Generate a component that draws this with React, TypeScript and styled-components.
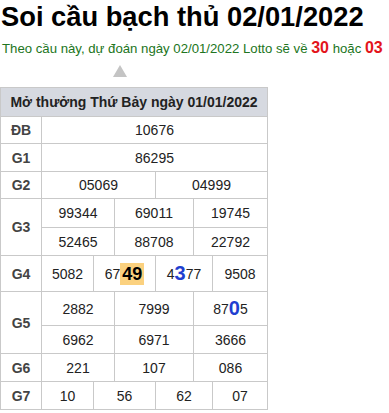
import React from "react";
import styled, { createGlobalStyle } from "styled-components";

const GlobalStyle = createGlobalStyle`
  body {
    margin: 0;
    background: #fff;
    font-family: "Liberation Sans", Arial, sans-serif;
  }
`;

const Page = styled.div`
  display: flex;
  flex-direction: column;
  align-items: flex-start;
`;

const Title = styled.h1`
  margin: 2px 0 0;
  padding-left: 1px;
  font-size: 27.3px;
  line-height: 30px;
  font-weight: bold;
  color: #000;
  white-space: nowrap;
`;

const Prediction = styled.div`
  margin-top: 6px;
  padding-left: 2px;
  font-size: 13.2px;
  line-height: 20px;
  color: #217521;
  white-space: nowrap;
`;

const Lotto = styled.b`
  font-size: 16px;
  color: #e3141b;
`;

const Arrow = styled.div`
  margin: 6px 0 0 113px;
  width: 0;
  height: 0;
  border-left: 7.5px solid transparent;
  border-right: 7.5px solid transparent;
  border-bottom: 12px solid #c4c4c4;
`;

const Board = styled.div`
  margin-top: 10px;
  display: grid;
  grid-template-columns: 40px 51px 20px 40px 37px 18px 54px;
  grid-template-rows: 28px 26px 27px 26px 28px 27px 35px 33px 27px 27px 27px;
  gap: 1px;
  padding: 1px;
  background: #c9c9c9;
  font-size: 14px;
`;

const Heading = styled.div`
  grid-column: 1 / -1;
  display: flex;
  align-items: center;
  justify-content: center;
  background: #d6d9e0;
  font-weight: bold;
  color: #222;
`;

const Prize = styled.div<{ $rows?: number }>`
  grid-row: span ${(p) => p.$rows ?? 1};
  display: flex;
  align-items: center;
  justify-content: center;
  background: #fff;
  font-weight: bold;
  color: #444;
`;

const Num = styled.div<{ $span: number }>`
  grid-column: span ${(p) => p.$span};
  display: flex;
  align-items: center;
  justify-content: center;
  background: #fff;
  color: #222;
  white-space: nowrap;
`;

const Hit = styled.span`
  display: inline-block;
  padding: 0 2px;
  line-height: 22px;
  font-size: 18px;
  font-weight: bold;
  color: #000;
  background: #fbd17f;
`;

const Mark = styled.span`
  font-size: 20px;
  font-weight: bold;
  color: #1f3fd0;
`;

type Cell = { text: React.ReactNode; span: number };
type Prize = { name: string; lines: Cell[][] };

const cells = (values: string[], spans: number[]): Cell[] =>
  values.map((text, i) => ({ text, span: spans[i] }));

const prizes: Prize[] = [
  { name: "ĐB", lines: [cells(["10676"], [6])] },
  { name: "G1", lines: [cells(["86295"], [6])] },
  { name: "G2", lines: [cells(["05069", "04999"], [3, 3])] },
  {
    name: "G3",
    lines: [
      cells(["99344", "69011", "19745"], [2, 2, 2]),
      cells(["52465", "88708", "22792"], [2, 2, 2]),
    ],
  },
  {
    name: "G4",
    lines: [
      [
        { text: "5082", span: 1 },
        { text: <>67<Hit>49</Hit></>, span: 2 },
        { text: <>4<Mark>3</Mark>77</>, span: 2 },
        { text: "9508", span: 1 },
      ],
    ],
  },
  {
    name: "G5",
    lines: [
      [
        { text: "2882", span: 2 },
        { text: "7999", span: 2 },
        { text: <>87<Mark>0</Mark>5</>, span: 2 },
      ],
      cells(["6962", "6971", "3666"], [2, 2, 2]),
    ],
  },
  { name: "G6", lines: [cells(["221", "107", "086"], [2, 2, 2])] },
  { name: "G7", lines: [cells(["10", "56", "62", "07"], [1, 2, 2, 1])] },
];

export default function App() {
  return (
    <Page>
      <GlobalStyle />
      <Title>Soi cầu bạch thủ 02/01/2022</Title>
      <Prediction>
        Theo cầu này, dự đoán ngày 02/01/2022 Lotto sẽ về <Lotto>30</Lotto> hoặc{" "}
        <Lotto>03</Lotto>
      </Prediction>
      <Arrow />
      <Board>
        <Heading>Mở thưởng Thứ Bảy ngày 01/01/2022</Heading>
        {prizes.map((prize) => (
          <React.Fragment key={prize.name}>
            <Prize $rows={prize.lines.length}>{prize.name}</Prize>
            {prize.lines.flat().map((cell, i) => (
              <Num key={i} $span={cell.span}>
                {cell.text}
              </Num>
            ))}
          </React.Fragment>
        ))}
      </Board>
    </Page>
  );
}
